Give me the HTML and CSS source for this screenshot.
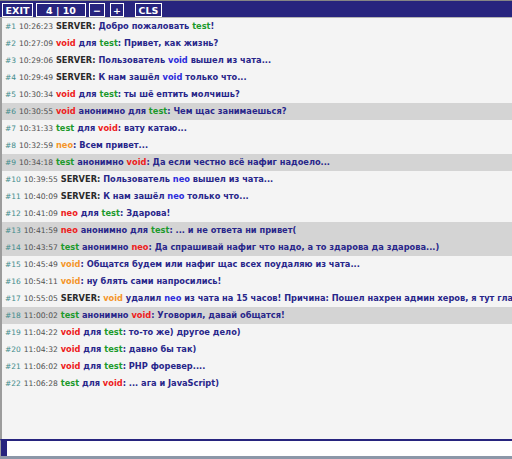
FILE: index.html
```html
<!DOCTYPE html>
<html>
<head>
<meta charset="utf-8">
<link rel="stylesheet" href="styles.css">
</head>
<body>
<div class="app">
  <div class="bar">
    <div class="btn b-exit">EXIT</div>
    <div class="btn b-page">4 | 10</div>
    <div class="btn b-minus">−</div>
    <div class="btn b-plus">+</div>
    <div class="btn b-cls">CLS</div>
  </div>
  <div class="chat">
    <div class="row"><span class="id">#1</span> <span class="time">10:26:23</span> <span class="srv">SERVER:</span> Добро пожаловать <span class="green">test</span>!</div>
    <div class="row"><span class="id">#2</span> <span class="time">10:27:09</span> <span class="red">void</span> для <span class="green">test</span>: Привет, как жизнь?</div>
    <div class="row"><span class="id">#3</span> <span class="time">10:29:06</span> <span class="srv">SERVER:</span> Пользователь <span class="blue">void</span> вышел из чата...</div>
    <div class="row"><span class="id">#4</span> <span class="time">10:29:49</span> <span class="srv">SERVER:</span> К нам зашёл <span class="blue">void</span> только что...</div>
    <div class="row"><span class="id">#5</span> <span class="time">10:30:34</span> <span class="red">void</span> для <span class="green">test</span>: ты шё ептить молчишь?</div>
    <div class="row hl"><span class="id">#6</span> <span class="time">10:30:55</span> <span class="red">void</span> анонимно для <span class="green">test</span>: Чем щас занимаешься?</div>
    <div class="row"><span class="id">#7</span> <span class="time">10:31:33</span> <span class="green">test</span> для <span class="red">void</span>: вату катаю...</div>
    <div class="row"><span class="id">#8</span> <span class="time">10:32:59</span> <span class="orange">neo</span>: Всем привет...</div>
    <div class="row hl"><span class="id">#9</span> <span class="time">10:34:18</span> <span class="green">test</span> анонимно <span class="red">void</span>: Да если честно всё нафиг надоело...</div>
    <div class="row"><span class="id">#10</span> <span class="time">10:39:55</span> <span class="srv">SERVER:</span> Пользователь <span class="blue">neo</span> вышел из чата...</div>
    <div class="row"><span class="id">#11</span> <span class="time">10:40:09</span> <span class="srv">SERVER:</span> К нам зашёл <span class="blue">neo</span> только что...</div>
    <div class="row"><span class="id">#12</span> <span class="time">10:41:09</span> <span class="red">neo</span> для <span class="green">test</span>: Здарова!</div>
    <div class="row hl"><span class="id">#13</span> <span class="time">10:41:59</span> <span class="red">neo</span> анонимно для <span class="green">test</span>: ... и не ответа ни привет(</div>
    <div class="row hl"><span class="id">#14</span> <span class="time">10:43:57</span> <span class="green">test</span> анонимно <span class="red">neo</span>: Да спрашивай нафиг что надо, а то здарова да здарова...)</div>
    <div class="row"><span class="id">#15</span> <span class="time">10:45:49</span> <span class="orange">void</span>: Общатся будем или нафиг щас всех поудаляю из чата...</div>
    <div class="row"><span class="id">#16</span> <span class="time">10:54:11</span> <span class="orange">void</span>: ну блять сами напросились!</div>
    <div class="row"><span class="id">#17</span> <span class="time">10:55:05</span> <span class="srv">SERVER:</span> <span class="orange">void</span> удалил <span class="blue">neo</span> из чата на 15 часов! Причина: Пошел нахрен админ херов, я тут главный!</div>
    <div class="row hl"><span class="id">#18</span> <span class="time">11:00:02</span> <span class="green">test</span> анонимно <span class="red">void</span>: Уговорил, давай общатся!</div>
    <div class="row"><span class="id">#19</span> <span class="time">11:04:22</span> <span class="red">void</span> для <span class="green">test</span>: то-то же) другое дело)</div>
    <div class="row"><span class="id">#20</span> <span class="time">11:04:32</span> <span class="red">void</span> для <span class="green">test</span>: давно бы так)</div>
    <div class="row"><span class="id">#21</span> <span class="time">11:06:02</span> <span class="red">void</span> для <span class="green">test</span>: PHP форевер....</div>
    <div class="row"><span class="id">#22</span> <span class="time">11:06:28</span> <span class="green">test</span> для <span class="red">void</span>: ... ага и JavaScript)</div>
  </div>
  <div class="input">
    <div class="input-tab"></div>
    <div class="input-field"></div>
  </div>
</div>
</body>
</html>
```
FILE: styles.css
```css
html, body {
  margin: 0;
  padding: 0;
  background: #f4f4f4;
}
.app {
  width: 512px;
  height: 459px;
  display: flex;
  flex-direction: column;
  overflow: hidden;
  font-family: "DejaVu Sans", Verdana, sans-serif;
}
.bar {
  height: 14px;
  padding: 2px 0 0 2px;
  background: #27247e;
  border-top: 1px solid #858585;
  border-bottom: 1px solid #b3b3b3;
  display: flex;
  align-items: flex-start;
}
.btn {
  box-sizing: border-box;
  height: 14px;
  border: 1px solid #ffffff;
  color: #ffffff;
  font-weight: bold;
  font-size: 9.5px;
  display: flex;
  align-items: center;
  justify-content: center;
}
.b-exit { width: 31px; }
.b-page { width: 50px; margin-left: 3px; }
.b-minus { width: 16px; margin-left: 3px; }
.b-plus { width: 14px; margin-left: 5px; }
.b-cls { width: 27px; margin-left: 11px; }
.chat {
  flex: 1;
  border-left: 2px solid #9c9c9c;
  background: #f4f4f4;
  overflow: hidden;
}
.row {
  height: 17px;
  line-height: 17px;
  padding-left: 3px;
  white-space: nowrap;
  overflow: hidden;
  font-size: 8.25px;
  font-weight: bold;
  color: #28268a;
}
.row.hl {
  background: #d4d4d4;
}
.id {
  font-weight: normal;
  font-size: 7.5px;
  color: #3f8c8c;
}
.time {
  font-weight: normal;
  font-size: 7.6px;
  color: #505050;
}
.srv { color: #2a2a2a; }
.red { color: #ee2020; }
.green { color: #1c9a2c; }
.orange { color: #f5962a; }
.blue { color: #2b2bdc; }
.input {
  height: 15px;
  border-top: 2px solid #27247e;
  border-bottom: 3px solid #8c97a8;
  border-left: 1px solid #9c9c9c;
  display: flex;
}
.input-tab {
  width: 6px;
  background: #27247e;
}
.input-field {
  flex: 1;
  background: #ffffff;
}
```
